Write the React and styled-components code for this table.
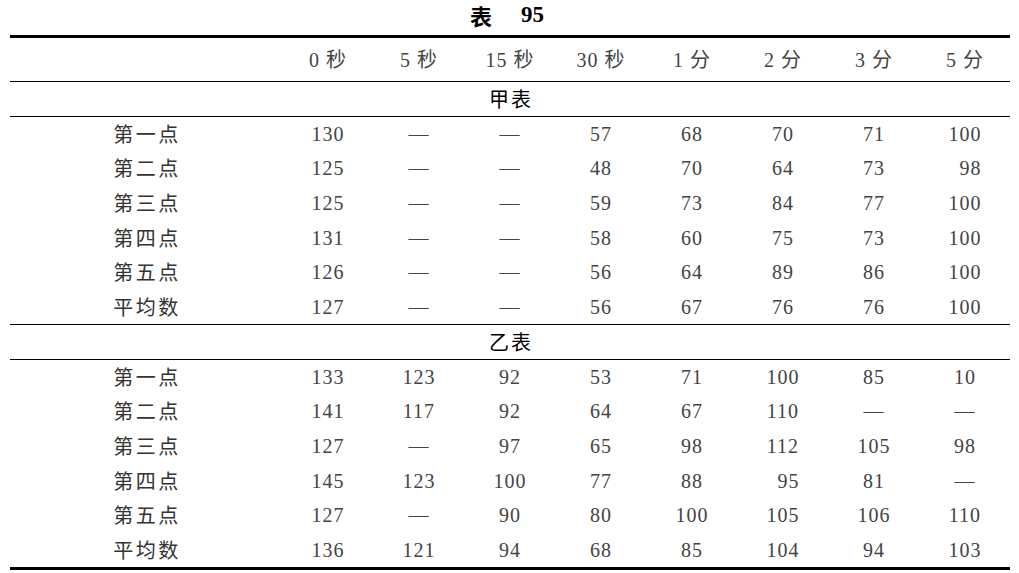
import React from "react";
import styled, { createGlobalStyle } from "styled-components";

const GlobalStyle = createGlobalStyle`
  body {
    margin: 0;
    background: #ffffff;
    font-family: "Liberation Serif", "Noto Sans CJK SC", serif;
  }
`;

const columns = ["0 秒", "5 秒", "15 秒", "30 秒", "1 分", "2 分", "3 分", "5 分"];

const D = "—";
const F = "\u2007";

const sections = [
  {
    name: "甲表",
    rows: [
      ["第一点", "130", D, D, "57", "68", "70", "71", "100"],
      ["第二点", "125", D, D, "48", "70", "64", "73", F + "98"],
      ["第三点", "125", D, D, "59", "73", "84", "77", "100"],
      ["第四点", "131", D, D, "58", "60", "75", "73", "100"],
      ["第五点", "126", D, D, "56", "64", "89", "86", "100"],
      ["平均数", "127", D, D, "56", "67", "76", "76", "100"],
    ],
  },
  {
    name: "乙表",
    rows: [
      ["第一点", "133", "123", "92", "53", "71", "100", "85", "10"],
      ["第二点", "141", "117", "92", "64", "67", "110", D, D],
      ["第三点", "127", D, "97", "65", "98", "112", "105", "98"],
      ["第四点", "145", "123", "100", "77", "88", F + "95", "81", D],
      ["第五点", "127", D, "90", "80", "100", "105", "106", "110"],
      ["平均数", "136", "121", "94", "68", "85", "104", "94", "103"],
    ],
  },
];

function App() {
  return (
    <>
      <GlobalStyle />
      <Page>
        <Title>
          <span>表</span>
          <TitleNum>95</TitleNum>
        </Title>
        <Table>
          <Row $height={43} $rule>
            <Label />
            {columns.map((c) => (
              <Cell key={c}>{c}</Cell>
            ))}
          </Row>
          {sections.map((s, i) => (
            <Group key={s.name} $rule={i < sections.length - 1}>
              <SectionHead>{s.name}</SectionHead>
              {s.rows.map((r) => (
                <Row key={r[0]} $height={34.6}>
                  <Label>{r[0]}</Label>
                  {r.slice(1).map((v, j) => (
                    <Cell key={j}>{v}</Cell>
                  ))}
                </Row>
              ))}
            </Group>
          ))}
        </Table>
      </Page>
    </>
  );
}

export default App;

const Page = styled.div`
  width: 1000px;
  margin-left: 10px;
`;

const Title = styled.div`
  height: 35px;
  display: flex;
  justify-content: center;
  align-items: center;
  gap: 29px;
  padding-right: 6px;
  padding-bottom: 5px;
  box-sizing: border-box;
  font-family: "Noto Sans CJK SC", sans-serif;
  font-size: 22px;
  font-weight: 700;
  color: #000;
`;

const TitleNum = styled.span`
  font-family: "Liberation Serif", serif;
  font-size: 23px;
  font-weight: 700;
`;

const Table = styled.div`
  border-top: 3px solid #000;
  border-bottom: 3px solid #000;
`;

const Row = styled.div`
  display: grid;
  grid-template-columns: 272px repeat(8, 91px);
  align-items: center;
  height: ${(p) => p.$height}px;
  border-bottom: ${(p) => (p.$rule ? "1px solid #000" : "none")};
  color: #444;
  font-size: 20px;
`;

const Cell = styled.div`
  text-align: center;
  letter-spacing: 1px;
  padding-left: 1px;
  white-space: pre;
  line-height: 1;
`;

const Label = styled.div`
  text-align: center;
  font-family: "Noto Sans CJK SC", sans-serif;
  font-size: 20px;
  letter-spacing: 2.5px;
  padding-left: 2px;
  line-height: 1;
  color: #333;
`;

const Group = styled.div`
  border-bottom: ${(p) => (p.$rule ? "1px solid #000" : "none")};
`;

const SectionHead = styled.div`
  height: 33.5px;
  display: flex;
  justify-content: center;
  align-items: center;
  border-bottom: 1px solid #000;
  font-family: "Noto Sans CJK SC", sans-serif;
  font-size: 20px;
  letter-spacing: 2px;
  padding-left: 2px;
  color: #000;
`;
